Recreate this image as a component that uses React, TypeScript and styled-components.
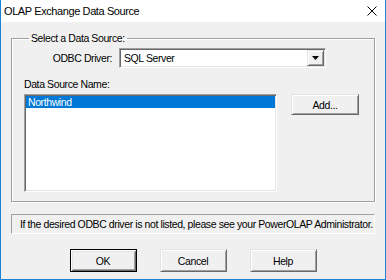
import React from 'react';
import styled, { createGlobalStyle } from 'styled-components';

const GlobalStyle = createGlobalStyle`
  html, body {
    margin: 0;
    padding: 0;
    background: #f0f0f0;
  }
  * {
    box-sizing: border-box;
  }
`;

const Window = styled.div`
  width: 386px;
  height: 280px;
  display: flex;
  flex-direction: column;
  background: #f0f0f0;
  border: 1px solid #1883d7;
  border-top: none;
  font-family: "Liberation Sans", Arial, sans-serif;
  font-size: 10.5px;
  letter-spacing: -0.4px;
  color: #000;
`;

const TitleBar = styled.div`
  height: 22px;
  flex: none;
  display: flex;
  align-items: center;
  justify-content: space-between;
  background: #fff;
  padding: 0 8px 0 3px;
`;

const Title = styled.span`
  font-size: 11px;
  line-height: 16px;
  letter-spacing: -0.4px;
`;

const Body = styled.div`
  flex: 1;
  display: flex;
  flex-direction: column;
  padding: 10px 10px 0;
`;

const Group = styled.fieldset`
  margin: 0;
  padding: 3px 12px 9px 12px;
  border: 1px solid #a0a0a0;
  box-shadow: inset 1px 1px #fff, 1px 1px #fff;
  display: flex;
  flex-direction: column;
`;

const Legend = styled.legend`
  padding: 0 2px;
  margin-left: 5px;
  line-height: 13px;
`;

const FieldRow = styled.div`
  display: flex;
  align-items: center;
  gap: 7px;
`;

const FieldLabel = styled.label`
  width: 88px;
  text-align: right;
`;

const Combo = styled.div`
  width: 207px;
  height: 20px;
  display: flex;
  align-items: stretch;
  background: #fff;
  border-style: solid;
  border-width: 1px;
  border-color: #a0a0a0 #fff #fff #a0a0a0;
  box-shadow: inset 1px 1px #696969, inset -1px -1px #e3e3e3;
  padding: 1px;
`;

const ComboValue = styled.span`
  flex: 1;
  padding-left: 3px;
  line-height: 16px;
`;

const ComboButton = styled.div`
  width: 17px;
  display: flex;
  align-items: center;
  justify-content: center;
  background: #f0f0f0;
  border-style: solid;
  border-width: 1px;
  border-color: #e3e3e3 #696969 #696969 #e3e3e3;
  box-shadow: inset 1px 1px #fff, inset -1px -1px #a0a0a0;
`;

const SectionLabel = styled.div`
  margin-top: 10px;
  line-height: 13px;
`;

const ListRow = styled.div`
  display: flex;
  align-items: flex-start;
  gap: 14px;
  margin-top: 3px;
`;

const ListBox = styled.div`
  width: 253px;
  height: 98px;
  background: #fff;
  border-style: solid;
  border-width: 1px;
  border-color: #a0a0a0 #fff #fff #a0a0a0;
  box-shadow: inset 1px 1px #696969, inset -1px -1px #e3e3e3;
  padding: 1px;
`;

const ListItem = styled.div<{ selected?: boolean }>`
  height: 12px;
  line-height: 12px;
  padding-left: 2px;
  background: ${p => (p.selected ? '#0078d7' : 'transparent')};
  color: ${p => (p.selected ? '#fff' : '#000')};
`;

const Button = styled.button<{ isDefault?: boolean; w?: number; h?: number }>`
  width: ${p => p.w ?? 67}px;
  height: ${p => p.h ?? 23}px;
  margin: 0;
  padding: 0;
  font: inherit;
  letter-spacing: inherit;
  color: #000;
  background: #f0f0f0;
  border-style: solid;
  border-width: 1px;
  border-color: ${p => (p.isDefault ? '#000' : '#e3e3e3 #696969 #696969 #e3e3e3')};
  box-shadow: ${p =>
    p.isDefault
      ? 'inset 1px 1px #fff, inset -1px -1px #696969, inset 2px 2px #e3e3e3, inset -2px -2px #a0a0a0'
      : 'inset 1px 1px #fff, inset -1px -1px #a0a0a0'};
`;

const InfoBox = styled.div`
  margin-top: 12px;
  height: 20px;
  display: flex;
  align-items: center;
  padding-left: 8px;
  border-style: solid;
  border-width: 1px;
  border-color: #a0a0a0 #fff #fff #a0a0a0;
  white-space: nowrap;
`;

const ButtonRow = styled.div`
  margin-top: 15px;
  display: flex;
  justify-content: center;
  gap: 23px;
`;

const CloseIcon = () => (
  <svg width="10" height="10" viewBox="0 0 10 10">
    <path d="M0.5 0.5 L9.5 9.5 M9.5 0.5 L0.5 9.5" stroke="#000" strokeWidth="1" />
  </svg>
);

const ArrowIcon = () => (
  <svg width="7" height="4" viewBox="0 0 7 4">
    <polygon points="0,0 7,0 3.5,4" fill="#000" />
  </svg>
);

export default function App() {
  return (
    <>
      <GlobalStyle />
      <Window>
        <TitleBar>
          <Title>OLAP Exchange Data Source</Title>
          <CloseIcon />
        </TitleBar>
        <Body>
          <Group>
            <Legend>Select a Data Source:</Legend>
            <FieldRow>
              <FieldLabel>ODBC Driver:</FieldLabel>
              <Combo>
                <ComboValue>SQL Server</ComboValue>
                <ComboButton>
                  <ArrowIcon />
                </ComboButton>
              </Combo>
            </FieldRow>
            <SectionLabel>Data Source Name:</SectionLabel>
            <ListRow>
              <ListBox>
                <ListItem selected>Northwind</ListItem>
              </ListBox>
              <Button w={68} h={21}>Add...</Button>
            </ListRow>
          </Group>
          <InfoBox>
            If the desired ODBC driver is not listed, please see your PowerOLAP Administrator.
          </InfoBox>
          <ButtonRow>
            <Button isDefault>OK</Button>
            <Button>Cancel</Button>
            <Button>Help</Button>
          </ButtonRow>
        </Body>
      </Window>
    </>
  );
}
